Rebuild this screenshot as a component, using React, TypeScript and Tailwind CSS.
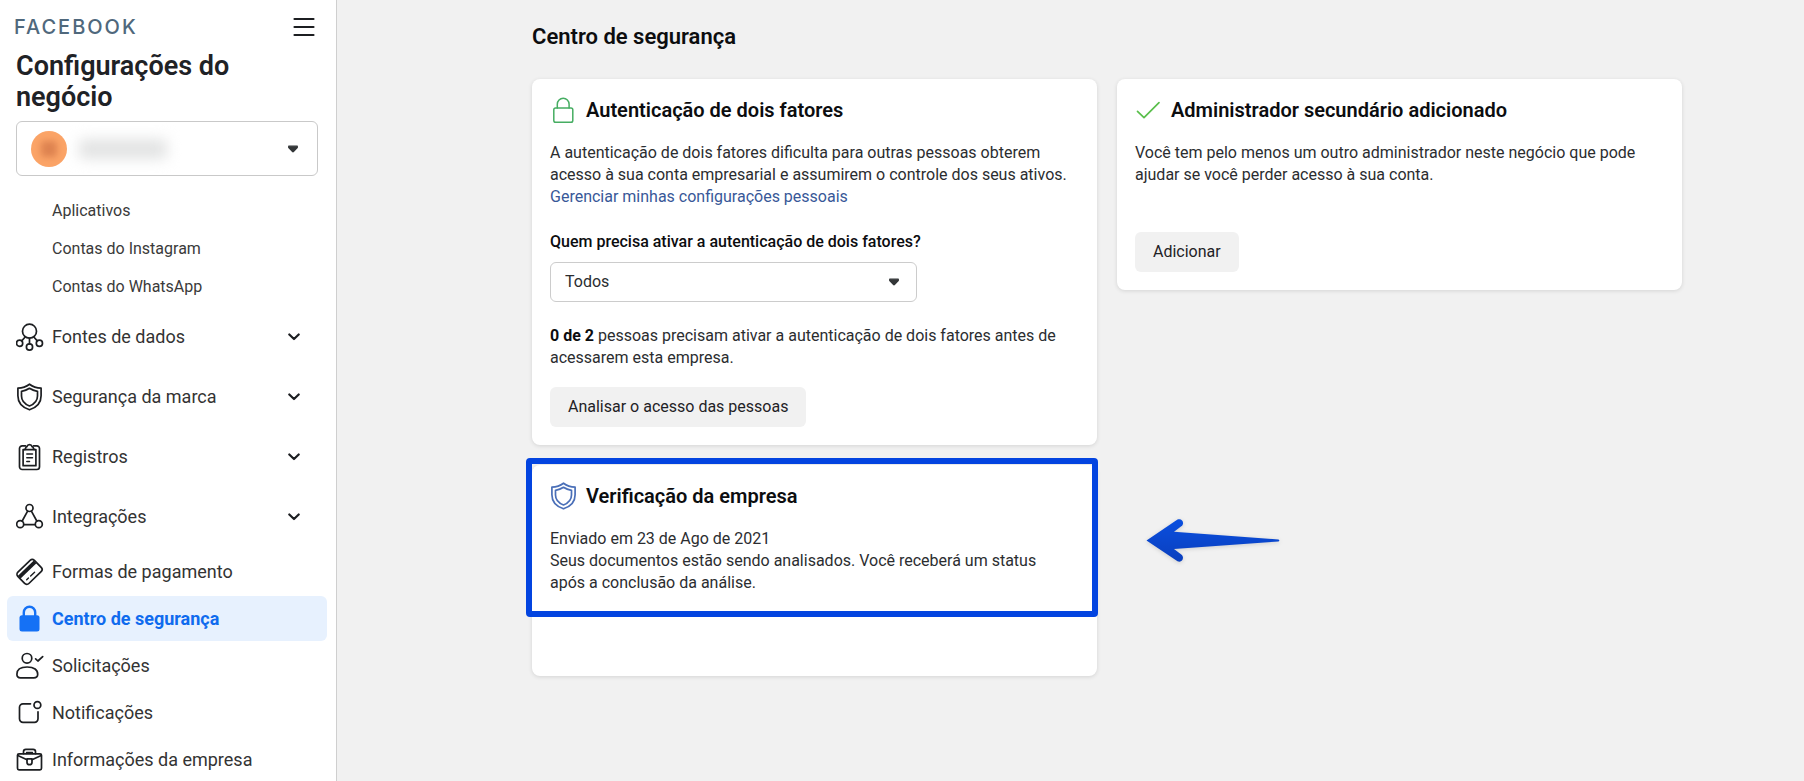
import { useState } from "react";
import type { ReactNode } from "react";

type IconProps = { className?: string };

function Icon({ className = "", children }: { className?: string; children: ReactNode }) {
  return (
    <svg
      viewBox="0 0 28 28"
      fill="none"
      stroke="currentColor"
      strokeWidth="1.7"
      strokeLinecap="round"
      strokeLinejoin="round"
      aria-hidden="true"
      className={`size-7 shrink-0 ${className}`}
    >
      {children}
    </svg>
  );
}

const DataSourcesIcon = () => (
  <Icon>
    <circle cx="13.5" cy="8.2" r="7" />
    <circle cx="3.6" cy="20.2" r="3.1" />
    <circle cx="13.5" cy="24" r="3.1" />
    <circle cx="23.4" cy="20.2" r="3.1" />
    <path d="M9.2 14 5.7 17.8M13.5 15.4v5.4M17.8 14l3.5 3.8" />
  </Icon>
);

const ShieldIcon = ({ className }: IconProps) => (
  <Icon className={className}>
    <path d="M13.5 1.2c-3.3 2.5-7.2 3.8-11.6 4v7.6c0 6.4 4.4 11.7 11.6 14 7.2-2.3 11.6-7.6 11.6-14V5.2c-4.4-.2-8.3-1.5-11.6-4Z" />
    <path d="M13.5 5.3c-2.3 1.6-5 2.6-8 3v4.7c0 4.3 3 8 8 10 5-2 8-5.7 8-10V8.3c-3-.4-5.7-1.4-8-3Z" />
  </Icon>
);

const ClipboardIcon = () => (
  <Icon>
    <path d="M9.5 2.800H6.200a2.700 2.700 0 0 0-2.700 2.700v18.300a2.700 2.700 0 0 0 2.700 2.700h14.600a2.700 2.700 0 0 0 2.700-2.700V5.500a2.700 2.700 0 0 0-2.700-2.700h-3.300" />
    <path d="M8.700 6.600H7.100v16.100h12.800V6.600h-1.600" />
    <path d="M8.900 6.600 10.100 4l.9-.4a2.600 2.600 0 0 1 5 0l.9.4 1.200 2.600Z" />
    <path d="M10.800 11h5.700M10.800 14.700h5.700M10.800 18.400h2.700" strokeWidth="1.5" />
  </Icon>
);

const IntegrationsIcon = () => (
  <Icon>
    <circle cx="13.5" cy="5" r="3.5" />
    <circle cx="4.2" cy="21.2" r="3.5" />
    <circle cx="22.8" cy="21.2" r="3.5" />
    <path d="M11.6 8.2 6.2 18M15.4 8.2 20.8 18M8 21.7h11" />
  </Icon>
);

const CardIcon = () => (
  <Icon>
    <g transform="rotate(-44 13.5 13.9)">
      <rect x="2" y="6" width="23" height="15.8" rx="3" />
      <path d="M2.5 10.6h22" strokeWidth="3.8" strokeLinecap="butt" />
      <path d="M6 17.6h2.500M11.500 17.600h5.500" strokeWidth="1.4" />
    </g>
  </Icon>
);

const LockSolidIcon = () => (
  <Icon>
    <path d="M7.8 12V7.500a5.700 5.700 0 0 1 11.400 0V12" strokeWidth="2.4" />
    <rect x="3.5" y="10.2" width="20" height="16.3" rx="2.5" fill="currentColor" stroke="none" />
  </Icon>
);

const UserCheckIcon = () => (
  <Icon>
    <circle cx="11" cy="6.3" r="4.8" />
    <path d="M4.500 25.800h13.200c2.700 0 4-1.400 4-3.600 0-4.300-3.400-7.200-10.600-7.200S.9 17.900.9 22.200c0 2.200 1.100 3.600 3.600 3.600Z" />
    <path d="m19.600 6.800 2.300 2.200 4.800-4.400" />
  </Icon>
);

const BellBoxIcon = () => (
  <Icon>
    <path d="M14.500 4.800H7a3.500 3.500 0 0 0-3.500 3.500v11.500A3.500 3.500 0 0 0 7 23.300h11.500a3.500 3.500 0 0 0 3.500-3.500v-7" />
    <circle cx="21.4" cy="6" r="3.4" />
  </Icon>
);

const BriefcaseIcon = () => (
  <Icon>
    <path d="M7.500 7.600V5.800A2.400 2.400 0 0 1 9.900 3.400h7.200a2.400 2.400 0 0 1 2.400 2.400v1.800" />
    <path d="M10.500 7.600V6.400h6v1.200" strokeWidth="1.3" />
    <rect x="1.5" y="7.8" width="24" height="16" rx="1.5" />
    <path d="m1.800 9.500 9.200 4.200M25.200 9.500 16 13.700" />
    <path d="M11 12.800h5v3.400a2.500 2.500 0 0 1-5 0Z" />
  </Icon>
);

const LockOutlineIcon = () => (
  <Icon className="text-[#46ad62]">
    <path d="M7.300 12V8.200a5.900 5.900 0 0 1 11.800 0V12" strokeWidth="1.5" />
    <rect x="3.8" y="12" width="19" height="14.2" rx="1.8" strokeWidth="1.5" />
  </Icon>
);

const CheckIcon = () => (
  <Icon className="text-[#5abf4c]">
    <path d="m2.500 15.300 6.500 6.400L24 6.700" />
  </Icon>
);

function Caret({ className = "" }: IconProps) {
  return (
    <svg viewBox="0 0 12 8" className={`h-2 w-3 ${className}`} aria-hidden="true">
      <path
        d="M1.700 1.200h8.600v1.300L6.700 6.400a1 1 0 0 1-1.400 0L1.700 2.500Z"
        fill="#333638"
        stroke="#333638"
        strokeWidth="1.2"
        strokeLinejoin="round"
      />
    </svg>
  );
}

const subItems = ["Aplicativos", "Contas do Instagram", "Contas do WhatsApp"];

const groups = [
  { label: "Fontes de dados", icon: <DataSourcesIcon /> },
  { label: "Segurança da marca", icon: <ShieldIcon /> },
  { label: "Registros", icon: <ClipboardIcon /> },
  { label: "Integrações", icon: <IntegrationsIcon /> },
];

const links = [
  { label: "Formas de pagamento", icon: <CardIcon /> },
  { label: "Centro de segurança", icon: <LockSolidIcon />, active: true },
  { label: "Solicitações", icon: <UserCheckIcon /> },
  { label: "Notificações", icon: <BellBoxIcon /> },
  { label: "Informações da empresa", icon: <BriefcaseIcon /> },
];

function Sidebar() {
  return (
    <aside className="h-screen w-[337px] shrink-0 overflow-hidden border-r border-[#cfcfcf] bg-white">
      <div className="flex h-[50px] items-center justify-between pt-1 pr-[21px] pl-[14px]">
        <span className="font-['Inter'] text-xl font-medium tracking-widest text-[#4f687c]">FACEBOOK</span>
        <button type="button" aria-label="Menu">
          <svg viewBox="0 0 22 20" className="h-5 w-[22px]" stroke="#1c1e21" strokeWidth="2.2" strokeLinecap="round" aria-hidden="true">
            <path d="M1.500 2h19M1.500 10h19M1.500 18h19" />
          </svg>
        </button>
      </div>

      <h1 className="px-4 pt-px text-[27px] leading-[31px] font-semibold text-[#1f2226]">
        Configurações do negócio
      </h1>

      <div className="relative mr-[18px] ml-4 mt-2 flex h-[55px] items-center rounded-md border border-[#c9c9c9] px-3.5">
        <span className="flex size-9 items-center justify-center rounded-full bg-[#fba467]">
          <span className="size-4 rounded bg-[#de8350] blur-[3px]" />
        </span>
        <span className="ml-3 h-5 w-22 rounded bg-[#e2e3e3] blur-[7px]" />
        <Caret className="mr-1 ml-auto" />
        <select aria-label="Empresa" className="absolute inset-0 size-full cursor-pointer appearance-none opacity-0" />
      </div>

      <nav className="pt-4">
        <ul>
          {subItems.map((item) => (
            <li key={item}>
              <a href="#" className="flex h-[38px] items-center pl-[52px] text-base text-[#3a3a3a]">
                {item}
              </a>
            </li>
          ))}
        </ul>
        <ul className="pt-px">
          {groups.map((group) => (
            <li key={group.label}>
              <button type="button" className="flex h-[60px] w-full items-center gap-2 pr-9 pl-4 text-left text-lg text-[#333]">
                <span className="text-[#1c1e21]">{group.icon}</span>
                {group.label}
                <svg viewBox="0 0 12 8" className="ml-auto h-2 w-3" fill="none" stroke="#1c1e21" strokeWidth="2.2" strokeLinecap="round" strokeLinejoin="round" aria-hidden="true">
                  <path d="m1.300 1.500 4.700 4.500 4.700-4.500" />
                </svg>
              </button>
            </li>
          ))}
        </ul>
        <ul className="flex flex-col gap-0.5 px-[7px] pt-0.5">
          {links.map((link) => (
            <li key={link.label}>
              <a
                href="#"
                aria-current={link.active ? "page" : undefined}
                className={
                  link.active
                    ? "mr-0.5 flex h-[45px] items-center gap-2 rounded-md bg-[#e7f1fe] pl-[9px] text-lg font-bold text-[#0f6bee]"
                    : "mr-0.5 flex h-[45px] items-center gap-2 pl-[9px] text-lg text-[#333]"
                }
              >
                <span className={link.active ? "text-[#1571f5]" : "text-[#1c1e21]"}>{link.icon}</span>
                {link.label}
              </a>
            </li>
          ))}
        </ul>
      </nav>
    </aside>
  );
}

function Card({ icon, title, className = "pb-[18px]", children }: { icon: ReactNode; title: string; className?: string; children: ReactNode }) {
  return (
    <section className={`rounded-lg bg-white px-[18px] pt-[17px] shadow-[0_1px_4px_rgba(0,0,0,0.12)] ${className}`}>
      <div className="flex items-center gap-2">
        {icon}
        <h3 className="text-xl leading-7 font-semibold text-[#0c0d0f]">{title}</h3>
      </div>
      {children}
    </section>
  );
}

function GrayButton({ children }: { children: ReactNode }) {
  return (
    <button type="button" className="h-10 rounded-md bg-[#f1f1f1] px-[18px] text-base text-[#1f2226]">
      {children}
    </button>
  );
}

export default function App() {
  const [who, setWho] = useState("Todos");

  return (
    <div className="flex min-h-screen bg-[#f1f1f1] font-['Roboto',sans-serif]">
      <Sidebar />

      <main className="min-w-0 flex-1 pt-[22px] pr-[122px] pl-[195px]">
        <h2 className="text-[22px] leading-[30px] font-semibold text-[#0c0d0f]">Centro de segurança</h2>

        <div className="mt-[27px] grid grid-cols-2 items-start gap-5">
          <div className="flex flex-col gap-5">
            <Card icon={<LockOutlineIcon />} title="Autenticação de dois fatores">
              <p className="mt-[18px] text-base leading-[22px] text-[#2b2d30]">
                A autenticação de dois fatores dificulta para outras pessoas obterem acesso à sua conta
                empresarial e assumirem o controle dos seus ativos.{" "}
                <a href="#" className="block text-[#385898]">
                  Gerenciar minhas configurações pessoais
                </a>
              </p>

              <label htmlFor="who" className="mt-[23px] block text-base leading-[22px] font-medium text-[#0c0d0f]">
                Quem precisa ativar a autenticação de dois fatores?
              </label>
              <div className="relative mt-[9px] w-[367px] max-w-full">
                <select
                  id="who"
                  value={who}
                  onChange={(e) => setWho(e.target.value)}
                  className="h-10 w-full appearance-none rounded-md border border-[#ccc] bg-white px-3.5 text-base text-[#2b2d30]"
                >
                  <option>Todos</option>
                </select>
                <Caret className="pointer-events-none absolute top-4 right-[17px]" />
              </div>

              <p className="mt-[23px] mb-[18px] text-base leading-[22px] text-[#2b2d30]">
                <strong className="font-bold text-[#0c0d0f]">0 de 2</strong> pessoas precisam ativar a
                autenticação de dois fatores antes de acessarem esta empresa.
              </p>
              <GrayButton>Analisar o acesso das pessoas</GrayButton>
            </Card>

            <div className="relative">
              <Card icon={<ShieldIcon className="text-[#4a6fb8]" />} title="Verificação da empresa" className="pb-[82px]">
                <p className="mt-[18px] pr-8 text-base leading-[22px] text-[#2b2d30]">
                  Enviado em 23 de Ago de 2021
                  <br />
                  Seus documentos estão sendo analisados. Você receberá um status após a conclusão da
                  análise.
                </p>
              </Card>
              {/* highlight frame and arrow */}
              <div className="pointer-events-none absolute -top-[7px] -right-px bottom-[59px] -left-1.5 rounded-sm border-[6px] border-[#0344e0]" />
              <svg
                viewBox="0 0 136 46"
                className="pointer-events-none absolute top-[52px] left-full ml-12 h-[46px] w-[136px] drop-shadow-sm"
                aria-hidden="true"
              >
                <defs>
                  <linearGradient id="arrow" x1="0" y1="0" x2="0" y2="1">
                    <stop offset="0" stopColor="#0a4fdf" />
                    <stop offset="1" stopColor="#0a3fbe" />
                  </linearGradient>
                </defs>
                <path
                  d="M1.500 23.500 32.500 2.500c5-1.800 7.500 4 3.800 6.800L29 14.700l104.500 7.700q1.700 1 0 2L29 32l7.300 5.500c3.700 2.900.8 8.800-3.800 6.700Z"
                  fill="url(#arrow)"
                />
              </svg>
            </div>
          </div>

          <Card icon={<CheckIcon />} title="Administrador secundário adicionado">
            <p className="mt-[18px] mb-[46px] text-base leading-[22px] text-[#2b2d30]">
              Você tem pelo menos um outro administrador neste negócio que pode ajudar se você perder
              acesso à sua conta.
            </p>
            <GrayButton>Adicionar</GrayButton>
          </Card>
        </div>
      </main>
    </div>
  );
}
